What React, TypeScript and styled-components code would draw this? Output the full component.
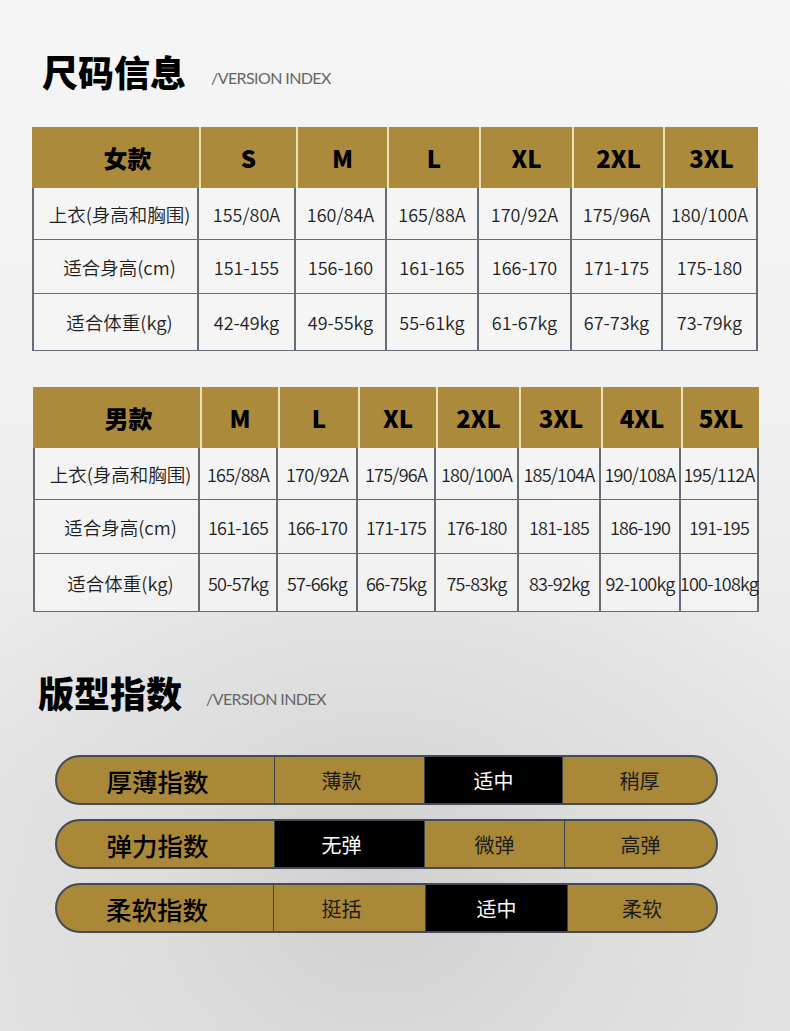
import React from "react";
import styled, { createGlobalStyle } from "styled-components";

const GlobalStyle = createGlobalStyle`
  html, body { margin: 0; padding: 0; }
  body { font-family: "Noto Sans CJK SC", "Noto Sans", sans-serif; }
`;

const Page = styled.div`
  width: 790px;
  height: 1031px;
  box-sizing: border-box;
  overflow: hidden;
  padding-top: 53px;
  display: flex;
  flex-direction: column;
  background:
    radial-gradient(ellipse 62% 42% at 48% 86%, rgba(208, 208, 208, 1) 0%, rgba(214, 214, 214, 0.6) 45%, rgba(230, 230, 230, 0) 100%),
    linear-gradient(180deg, #f5f5f5 0%, #f1f1f1 40%, #e6e6e6 75%, #e4e4e4 100%);
`;

const SectionHead = styled.div<{ $left: number; $top: number; $gap: number }>`
  display: flex;
  align-items: flex-end;
  gap: ${(p) => p.$gap}px;
  margin: ${(p) => p.$top}px 0 0 ${(p) => p.$left}px;
`;

const Title = styled.h1`
  margin: 0;
  font-family: "Noto Sans CJK SC", sans-serif;
  font-size: 36px;
  line-height: 36px;
  font-weight: 900;
  color: #000;
`;

const Sub = styled.span`
  font-family: Lato, "Liberation Sans", sans-serif;
  font-size: 16px;
  line-height: 16px;
  letter-spacing: -0.6px;
  color: #666;
  margin-bottom: 3px;
`;

const Table = styled.div<{ $cols: string; $rows: string; $top: number; $left: number }>`
  display: grid;
  grid-template-columns: ${(p) => p.$cols};
  grid-template-rows: ${(p) => p.$rows};
  width: 726px;
  margin: ${(p) => p.$top}px 0 0 ${(p) => p.$left}px;
`;

const HeadCell = styled.div<{ $first?: boolean }>`
  display: flex;
  align-items: center;
  justify-content: center;
  box-sizing: border-box;
  background: #ac8a3b;
  color: #000;
  font-size: 24px;
  font-weight: 900;
  padding-left: ${(p) => (p.$first ? 24 : 0)}px;
  border-left: ${(p) => (p.$first ? "none" : "2px solid #eee0b8")};
`;

const BodyCell = styled.div<{ $first?: boolean; $tight?: boolean }>`
  display: flex;
  align-items: center;
  justify-content: center;
  box-sizing: border-box;
  background: rgba(246, 246, 246, 0.75);
  color: #1e1e1e;
  font-size: ${(p) => (p.$first ? 18.5 : 18)}px;
  font-weight: 350;
  letter-spacing: ${(p) => (p.$tight ? -0.75 : 0)}px;
  white-space: nowrap;
  padding-left: ${(p) => (p.$first ? 8 : 0)}px;
  border-right: 2px solid #656c78;
  border-bottom: 1.5px solid #656c78;
  border-left: ${(p) => (p.$first ? "2px solid #656c78" : "none")};
`;

const Pills = styled.div`
  display: flex;
  flex-direction: column;
  gap: 14px;
  margin: 45px 0 0 55px;
`;

const PillRow = styled.div<{ $cols: string }>`
  display: grid;
  grid-template-columns: ${(p) => p.$cols};
  width: 663px;
  height: 50px;
  box-sizing: border-box;
  border: 2px solid #434a58;
  border-radius: 25px;
  overflow: hidden;
  background: #a98838;
`;

const PillLabel = styled.div`
  display: flex;
  align-items: center;
  justify-content: center;
  padding-right: 16px;
  font-size: 25.5px;
  font-weight: 500;
  color: #000;
`;

const PillSeg = styled.div<{ $on?: boolean; $shift?: boolean }>`
  display: flex;
  align-items: center;
  justify-content: center;
  box-sizing: border-box;
  padding-right: ${(p) => (p.$shift ? 16 : 0)}px;
  border-left: 1px solid #3b4250;
  background: ${(p) => (p.$on ? "#000" : "transparent")};
  color: ${(p) => (p.$on ? "#fff" : "#1c1c1c")};
  font-size: 20px;
  font-weight: 400;
`;

const women = {
  head: ["女款", "S", "M", "L", "XL", "2XL", "3XL"],
  rows: [
    ["上衣(身高和胸围)", "155/80A", "160/84A", "165/88A", "170/92A", "175/96A", "180/100A"],
    ["适合身高(cm)", "151-155", "156-160", "161-165", "166-170", "171-175", "175-180"],
    ["适合体重(kg)", "42-49kg", "49-55kg", "55-61kg", "61-67kg", "67-73kg", "73-79kg"],
  ],
};

const men = {
  head: ["男款", "M", "L", "XL", "2XL", "3XL", "4XL", "5XL"],
  rows: [
    ["上衣(身高和胸围)", "165/88A", "170/92A", "175/96A", "180/100A", "185/104A", "190/108A", "195/112A"],
    ["适合身高(cm)", "161-165", "166-170", "171-175", "176-180", "181-185", "186-190", "191-195"],
    ["适合体重(kg)", "50-57kg", "57-66kg", "66-75kg", "75-83kg", "83-92kg", "92-100kg", "100-108kg"],
  ],
};

const pills = [
  { label: "厚薄指数", cols: "217px 150px 138px 1fr", items: ["薄款", "适中", "稍厚"], on: 1 },
  { label: "弹力指数", cols: "217px 150px 140px 1fr", items: ["无弹", "微弹", "高弹"], on: 0 },
  { label: "柔软指数", cols: "216px 152px 142px 1fr", items: ["挺括", "适中", "柔软"], on: 1 },
];

function SizeTable({
  data,
  cols,
  rows,
  top,
  left,
  tight,
}: {
  data: { head: string[]; rows: string[][] };
  cols: string;
  rows: string;
  top: number;
  left: number;
  tight?: boolean;
}) {
  return (
    <Table $cols={cols} $rows={rows} $top={top} $left={left}>
      {data.head.map((h, i) => (
        <HeadCell key={"h" + i} $first={i === 0}>
          {h}
        </HeadCell>
      ))}
      {data.rows.map((r, ri) =>
        r.map((c, ci) => (
          <BodyCell key={ri + "-" + ci} $first={ci === 0} $tight={tight && ci > 0}>
            {c}
          </BodyCell>
        ))
      )}
    </Table>
  );
}

export default function App() {
  return (
    <>
      <GlobalStyle />
      <Page>
        <SectionHead $left={42} $top={0} $gap={25}>
          <Title>尺码信息</Title>
          <Sub>/VERSION INDEX</Sub>
        </SectionHead>
        <SizeTable
          data={women}
          cols="167px 97px 91px 92px 93px 91px 95px"
          rows="61px 52px 54px 57px"
          top={38}
          left={32}
        />
        <SizeTable
          data={men}
          cols="167px 78px 80px 78px 83px 82px 80px 78px"
          rows="61px 52px 54px 58px"
          top={36}
          left={33}
          tight
        />
        <SectionHead $left={38} $top={62} $gap={24}>
          <Title>版型指数</Title>
          <Sub>/VERSION INDEX</Sub>
        </SectionHead>
        <Pills>
          {pills.map((p) => (
            <PillRow key={p.label} $cols={p.cols}>
              <PillLabel>{p.label}</PillLabel>
              {p.items.map((it, i) => (
                <PillSeg key={it + i} $on={i === p.on} $shift={i === 0}>
                  {it}
                </PillSeg>
              ))}
            </PillRow>
          ))}
        </Pills>
      </Page>
    </>
  );
}
